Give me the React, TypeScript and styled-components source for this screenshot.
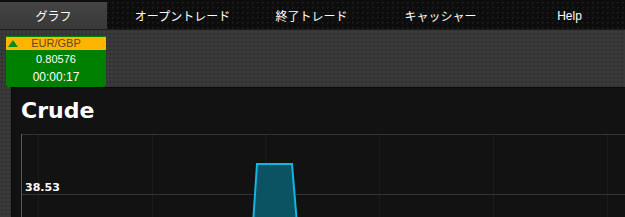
import React from "react";
import styled, { createGlobalStyle } from "styled-components";

const GlobalStyle = createGlobalStyle`
  html, body {
    margin: 0;
    padding: 0;
    overflow: hidden;
  }
  body {
    background-color: #3a3a3a;
    background-image: radial-gradient(rgba(0, 0, 0, 0.18) 1px, transparent 1px);
    background-size: 4px 4px;
    font-family: "Liberation Sans", Arial, "Noto Sans CJK JP", sans-serif;
  }
`;

const NavBar = styled.nav`
  display: flex;
  height: 30px;
  box-sizing: border-box;
  padding-top: 2px;
  background-color: #0d0d0d;
  background-image: radial-gradient(#1c1c1c 1px, transparent 1px);
  background-size: 5px 5px;
  border-bottom: 1px solid #1e1e1e;
  gap: 22px;
`;

const Tab = styled.a<{ $active?: boolean }>`
  width: 107px;
  display: flex;
  align-items: center;
  justify-content: center;
  color: #fff;
  font-size: 12px;
  text-decoration: none;
  background: ${(p) =>
    p.$active ? "linear-gradient(#454545, #383838)" : "transparent"};
`;

const Ticker = styled.div`
  width: 100px;
  margin: 6px 0 0 6px;
  padding-bottom: 1px;
  background: #008000;
  border-top: 1px solid #008000;
  border-radius: 0 0 3px 3px;
  color: #fff;
  text-align: center;
`;

const TickerHead = styled.div`
  position: relative;
  height: 13px;
  line-height: 13px;
  background: #ffb400;
  color: #5a4630;
  font-size: 11px;
`;

const UpArrow = styled.span`
  position: absolute;
  left: 2px;
  top: 3px;
  width: 0;
  height: 0;
  border-left: 5px solid transparent;
  border-right: 5px solid transparent;
  border-bottom: 7px solid #0a8a1a;
`;

const TickerRow = styled.div<{ $size: number }>`
  height: 18px;
  line-height: 18px;
  font-size: ${(p) => p.$size}px;
`;

const Panel = styled.section`
  margin-left: 11px;
  width: 640px;
  height: 140px;
  box-sizing: border-box;
  padding: 10px 0 0 9px;
  background: #121212;
  border: 1px solid #0a0a0a;
`;

const Title = styled.h1`
  margin: 0;
  height: 36px;
  color: #fff;
  font-family: "DejaVu Sans", Verdana, sans-serif;
  font-weight: bold;
  font-size: 22px;
  line-height: 26px;
`;

const gridX = [17, 131, 244, 358, 472, 586];

function Chart() {
  return (
    <svg width="620" height="90" style={{ display: "block" }}>
      {gridX.map((x) => (
        <line key={x} x1={x + 0.5} y1={0} x2={x + 0.5} y2={90} stroke="#1b1b1b" />
      ))}
      <line x1={0} y1={0.5} x2={620} y2={0.5} stroke="#333" />
      <line x1={0} y1={60.5} x2={620} y2={60.5} stroke="#333" />
      <polygon
        points="232,90 236,30 271,30 276,90"
        fill="#0b5262"
        stroke="#14b4e4"
        strokeWidth="2"
      />
      <line x1={0.5} y1={0} x2={0.5} y2={90} stroke="#5a5a5a" />
      <text
        x={4}
        y={57}
        fill="#fff"
        fontSize="11"
        fontWeight="bold"
        fontFamily="'DejaVu Sans', Verdana, sans-serif"
      >
        38.53
      </text>
    </svg>
  );
}

export default function App() {
  return (
    <>
      <GlobalStyle />
      <NavBar>
        <Tab $active>グラフ</Tab>
        <Tab>オープントレード</Tab>
        <Tab>終了トレード</Tab>
        <Tab>キャッシャー</Tab>
        <Tab>Help</Tab>
      </NavBar>
      <Ticker>
        <TickerHead>
          <UpArrow />
          EUR/GBP
        </TickerHead>
        <TickerRow $size={11}>0.80576</TickerRow>
        <TickerRow $size={12}>00:00:17</TickerRow>
      </Ticker>
      <Panel>
        <Title>Crude</Title>
        <Chart />
      </Panel>
    </>
  );
}
